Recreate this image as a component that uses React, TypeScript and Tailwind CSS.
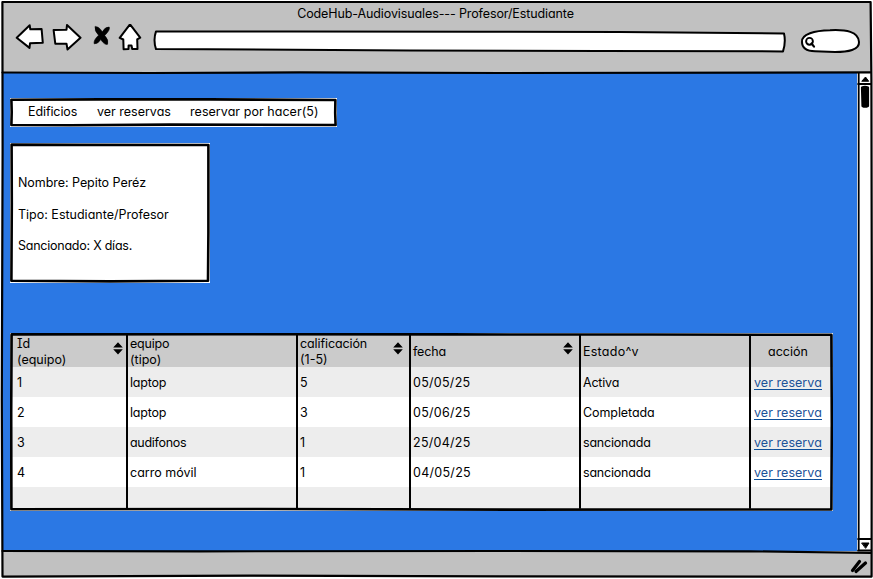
import type { ReactNode } from "react";

const widths = ["w-[116px]", "w-[170px]", "w-[113px]", "w-[170px]", "w-[170px]", "w-[82px]"];

const rows = [
  ["1", "laptop", "5", "05/05/25", "Activa"],
  ["2", "laptop", "3", "05/06/25", "Completada"],
  ["3", "audifonos", "1", "25/04/25", "sancionada"],
  ["4", "carro móvil", "1", "04/05/25", "sancionada"],
];

const columnTracking = ["", "", "", "tracking-[0.28px]", ""];

const cellTracking: Record<string, string> = {
  laptop: "tracking-[-0.2px]",
  audifonos: "tracking-[-0.3px]",
  sancionada: "tracking-[-0.2px]",
  Activa: "tracking-[-0.2px]",
  Completada: "tracking-[-0.08px]",
};

function Sketch({ w, h, children }: { w: number; h: number; children: ReactNode }) {
  return (
    <svg
      className="pointer-events-none absolute top-0 left-0"
      width={w}
      height={h}
      viewBox={`0 0 ${w} ${h}`}
      fill="none"
      stroke="#000"
      strokeWidth="2.2"
      strokeLinecap="round"
      strokeLinejoin="round"
    >
      {children}
    </svg>
  );
}

function Sorter({ margin }: { margin: string }) {
  return (
    <svg className={`${margin} mb-[7px] shrink-0`} width="10" height="13" viewBox="0 0 10 13">
      <path d="M5 0.3 9.8 5.5H0.2ZM0.2 7.2H9.8L5 12.5Z" fill="#000" />
    </svg>
  );
}

function Toolbar() {
  return (
    <svg
      className="block"
      width="873"
      height="49"
      viewBox="0 24 873 49"
      fill="#fff"
      stroke="#000"
      strokeWidth="2"
      strokeLinejoin="round"
      strokeLinecap="round"
    >
      <path d="M16.7 37.8 29.7 25.3 30.3 29.3 41.6 29 42.8 42.8 30 43.3 29.5 47.9Z" />
      <path d="M53.6 30 66.5 29.7 67 25 80.5 37.7 67.5 49.5 66.5 43.7 55.3 43.7Z" />
      <path
        d="M95.2 26.8Q98.5 25.8 102.3 31.8Q105.2 26.6 109.2 27Q110.6 29.6 104.7 35.5Q109 40 107.6 44.2Q104.6 45.4 100.8 39.6Q97.6 44.4 94.2 43.8Q93.2 40.4 98.6 35.2Q94 30.6 95.2 26.8Z"
        fill="#000"
        strokeWidth="0.6"
      />
      <path d="M130 24.3 140.2 37.6 137.2 39.4 137.5 49 132.2 49 131.5 45.4 128.6 45.4 128.5 49 123.6 49.3 123.3 39.5 119.7 37.8Z" />
      <path d="M156 31.4 290 31.6 480 31.8 620 32.1 784 33.4Q786 42 783 51.4L600 51.1 410 50.4 156 49.1Q153 40 156 31.4Z" />
      <path d="M802 42C801 34 815 30.5 830 30.2C846 29.4 858.5 31.5 859 42C859.5 50 848 52 835 52L815 51.3C806 51 802 48 802 42Z" />
      <circle cx="809.5" cy="41.3" r="3.4" strokeWidth="1.9" />
      <path d="M811.5 43.5 814 46.6" strokeWidth="2.2" />
    </svg>
  );
}

function Scrollbar() {
  return (
    <div className="relative h-full w-[15px] shrink-0 bg-white">
      <Sketch w={15} h={479}>
        <path d="M1.7 0V477M1 11H14M1 466H14M1 477.5H14" strokeWidth="1.8" />
        <path d="M5 8 8.5 4 11.5 8ZM5 470 12 470 8.8 475Z" fill="#000" strokeWidth="1" />
        <path d="M5 14.5Q8 13 11 14.5L11 33Q8 34.5 5.5 33Z" fill="#000" />
      </Sketch>
    </div>
  );
}

function DataTable() {
  return (
    <section className="relative mt-[50px] h-[178px] w-[823px] bg-white pt-[2px]">
      <div className="flex h-[32px] items-center bg-[#cbcbcb] pt-[2px]">
        <div className={`${widths[0]} flex items-center justify-between pl-[7px]`}>
          <div>
            <div className="[font-feature-settings:'cv11','cv08']">Id</div>
            <div>(equipo)</div>
          </div>
          <Sorter margin="mr-[3px]" />
        </div>
        <div className={`${widths[1]} pl-[4px]`}>
          <div className="tracking-[-0.2px]">equipo</div>
          <div>(tipo)</div>
        </div>
        <div className={`${widths[2]} flex items-center justify-between pl-[4px]`}>
          <div>
            <div className="tracking-[-0.1px]">calificación</div>
            <div>(1-5)</div>
          </div>
          <Sorter margin="mr-[6px]" />
        </div>
        <div className={`${widths[3]} flex items-center justify-between pl-[4px]`}>
          <div className="tracking-[-0.15px]">fecha</div>
          <Sorter margin="mr-[6px]" />
        </div>
        <div className={`${widths[4]} pl-[4px] tracking-[0.25px]`}>Estado^v</div>
        <div className={`${widths[5]} pr-[6px] pl-[2px] text-center`}>acción</div>
      </div>
      {rows.map((row, i) => (
        <div key={row[0]} className={`flex h-[30px] items-center pt-[2px] ${i % 2 ? "bg-white" : "bg-[#ededed]"}`}>
          {row.map((cell, c) => (
            <div
              key={c}
              className={`${widths[c]} ${c ? "pl-[4px]" : "pl-[7px]"} ${columnTracking[c]} ${cellTracking[cell] ?? ""}`}
            >
              {cell}
            </div>
          ))}
          <div className={`${widths[5]} flex pl-[5px]`}>
            <a className="mb-px h-[15px] border-b border-[#10509a] tracking-[0.05px] whitespace-nowrap text-[#1c5298]">
              ver reserva
            </a>
          </div>
        </div>
      ))}
      <div className="h-[22px] bg-[#ededed]" />
      <Sketch w={823} h={178}>
        <path
          d="M1.6 1.4 200 1.2 440 1.4 640 1.5 821.4 1.8 821.8 90 821.4 176.4 500 176.6 250 176 1.4 176.2 1.2 80Z"
          strokeWidth="2.6"
        />
        <path d="M117 2V175M287 2V175M400 2V175M570 2V175M740 2V175" strokeWidth="2" />
      </Sketch>
    </section>
  );
}

export default function App() {
  return (
    <div className="relative flex h-[579px] w-[873px] flex-col overflow-hidden bg-white font-['Inter','Noto_Sans',sans-serif] text-[12.5px] leading-4 text-black [font-feature-settings:'cv11']">
      <header className="h-[73px] shrink-0 bg-[#c1c1c1]">
        <h1 className="h-6 pt-[6px] pr-[2px] text-center tracking-[-0.11px]">
          CodeHub-Audiovisuales--- Profesor/Estudiante
        </h1>
        <Toolbar />
      </header>
      <div className="flex h-[478px] shrink-0 bg-[#2b78e4]">
        <main className="w-[857px] pt-[25px] pl-[10px]">
          <nav className="relative flex h-[29px] w-[327px] items-center bg-white pb-px pl-[18px]">
            <span className="w-[69px] tracking-[-0.1px]">Edificios</span>
            <span className="w-[93px]">ver reservas</span>
            <span className="tracking-[0.05px] whitespace-nowrap">reservar por hacer(5)</span>
            <Sketch w={327} h={29}>
              <path
                d="M1.4 1.8 90 1.4 200 1.4 325.4 2 325.2 15 325.6 27 160 26.6 60 27.2 1.4 27 1.7 14Z"
                strokeWidth="2.6"
              />
            </Sketch>
          </nav>
          <section className="relative mt-[16px] flex h-[140px] w-[200px] flex-col gap-4 bg-white pt-8 pl-2">
            <p className="tracking-[-0.05px]">Nombre: Pepito Peréz</p>
            <p>Tipo: Estudiante/Profesor</p>
            <p className="-mt-px tracking-[-0.24px]">Sancionado: X días.</p>
            <Sketch w={200} h={140}>
              <path
                d="M1.6 1.6 70 1.9 198.4 2 198.4 90 198 137.8 100 138.4 1.4 137.8 1.8 60Z"
                strokeWidth="2.6"
              />
            </Sketch>
          </section>
          <DataTable />
        </main>
        <Scrollbar />
      </div>
      <footer className="h-[28px] bg-[#c1c1c1]" />
      <Sketch w={873} h={579}>
        <path d="M0 0H873V579H0ZM2 2V577H871V2Z" fill="#fff" fillRule="evenodd" stroke="none" />
        <path d="M2.4 2H870.6L871.4 80 871.8 300 871.6 576.6 500 576.4 250 575.7 2.5 576.6 1.8 400 2.6 150Z" />
        <path d="M2.5 72.5 150 73 300 72.4 500 73 870.5 72.4M2.5 551 200 551.3 500 551 750 551.3 870.5 553" />
        <path d="M852.5 570.5 859.5 561.5M856 571.5 865.5 563" strokeWidth="3.2" />
      </Sketch>
    </div>
  );
}
